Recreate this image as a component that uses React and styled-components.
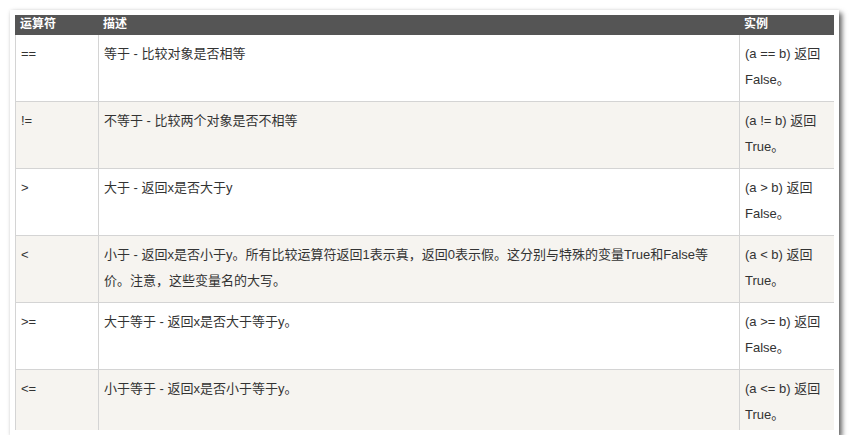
import React from "react";
import styled, { createGlobalStyle } from "styled-components";

const Global = createGlobalStyle`
  html, body { margin: 0; padding: 0; background: #fff; }
  body { font-family: "Liberation Sans", "Noto Sans CJK SC", sans-serif; }
`;

const Card = styled.div`
  margin: 10px 0 0 10px;
  width: 829px;
  height: 425px;
  box-sizing: border-box;
  padding: 5px;
  background: #fff;
  box-shadow: 3px 3px 5px rgba(0, 0, 0, 0.6), 0 0 3px rgba(0, 0, 0, 0.08);
`;

const Clip = styled.div`
  height: 415px;
  overflow: hidden;
`;

const Table = styled.table`
  width: 819px;
  border-collapse: collapse;
  table-layout: fixed;
  color: #333;
  font-size: 13px;
`;

const Th = styled.th`
  background: #555;
  color: #fff;
  border: 1px solid #555;
  font-size: 12px;
  font-weight: bold;
  text-align: left;
  vertical-align: top;
  padding: 1px 4px 2px;
  height: 14px;
  line-height: 15px;
`;

const Row = styled.tr`
  background: ${(p) => (p.$alt ? "#f6f4f0" : "#fff")};
`;

const Td = styled.td`
  border: 1px solid #d4d4d4;
  padding: 6px 5px 8px;
  line-height: 26px;
  vertical-align: top;
  min-width: 24px;
`;

const rows = [
  ["==", "等于 - 比较对象是否相等", "(a == b) 返回 False。"],
  ["!=", "不等于 - 比较两个对象是否不相等", "(a != b) 返回 True。"],
  [">", "大于 - 返回x是否大于y", "(a > b) 返回 False。"],
  [
    "<",
    "小于 - 返回x是否小于y。所有比较运算符返回1表示真，返回0表示假。这分别与特殊的变量True和False等价。注意，这些变量名的大写。",
    "(a < b) 返回 True。",
  ],
  [">=", "大于等于 - 返回x是否大于等于y。", "(a >= b) 返回 False。"],
  ["<=", "小于等于 - 返回x是否小于等于y。", "(a <= b) 返回 True。"],
];

export default function App() {
  return (
    <>
      <Global />
      <Card>
        <Clip>
          <Table>
            <colgroup>
              <col style={{ width: 83 }} />
              <col style={{ width: 641 }} />
              <col style={{ width: 95 }} />
            </colgroup>
            <thead>
              <tr>
                <Th>运算符</Th>
                <Th>描述</Th>
                <Th>实例</Th>
              </tr>
            </thead>
            <tbody>
              {rows.map((r, i) => (
                <Row key={i} $alt={i % 2 === 1}>
                  <Td>{r[0]}</Td>
                  <Td>{r[1]}</Td>
                  <Td>{r[2]}</Td>
                </Row>
              ))}
            </tbody>
          </Table>
        </Clip>
      </Card>
    </>
  );
}
